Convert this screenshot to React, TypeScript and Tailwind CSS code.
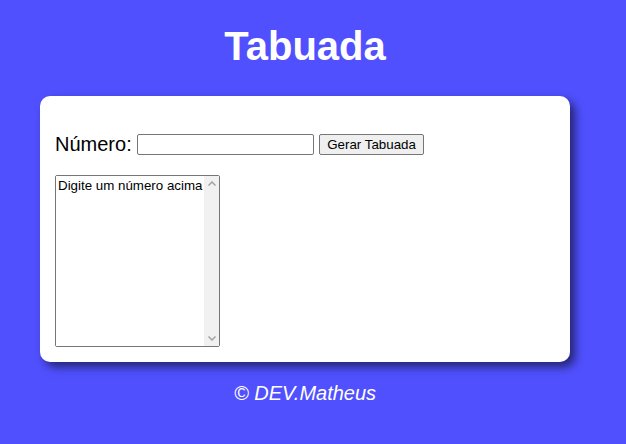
export default function App() {
  return (
    <div className="min-h-screen w-full bg-[#5050ff] font-['Liberation_Sans',Arial,sans-serif]">
      <div className="w-[610px] flex flex-col items-center">
        <h1 className="mt-[23px] text-[40px] leading-[46px] font-bold text-white">Tabuada</h1>

        <section className="mt-[27px] w-[530px] rounded-[10px] bg-white px-[15px] pt-[37px] pb-[15px] shadow-[5px_5px_10px_rgba(0,0,0,0.55)]">
          <div className="flex h-[23px] items-center">
            <label htmlFor="numero" className="text-[20px] leading-[23px] text-black">
              Número:
            </label>
            <input
              id="numero"
              type="number"
              className="ml-[5px] h-[21px] w-[177px] rounded-[2px] border border-[#767676] bg-white px-[2px] text-[13.33px] outline-none [appearance:textfield]"
            />
            <button
              type="button"
              className="ml-[5px] h-[21px] rounded-[2px] border border-[#767676] bg-[#efefef] px-[7.5px] text-[13.33px] leading-[15px] text-black"
            >
              Gerar Tabuada
            </button>
          </div>

          {/* textarea + fake classic scrollbar */}
          <div className="mt-[19px] flex h-[172px] w-[165px] rounded-[2px] border border-[#767676] bg-white">
            <textarea
              readOnly
              wrap="off"
              defaultValue="Digite um número acima"
              className="h-full min-w-0 flex-1 resize-none overflow-hidden whitespace-pre bg-white p-[2px] text-[13.33px] leading-[15px] text-black outline-none"
            />
            <div className="flex w-[15px] flex-col items-center justify-between bg-[#f1f1f1] py-[5px]">
              <svg width="8" height="5" viewBox="0 0 8 5">
                <path d="M0.5 4.5 L4 1 L7.5 4.5" fill="none" stroke="#a3a3a3" strokeWidth="1.5" />
              </svg>
              <svg width="8" height="5" viewBox="0 0 8 5">
                <path d="M0.5 0.5 L4 4 L7.5 0.5" fill="none" stroke="#a3a3a3" strokeWidth="1.5" />
              </svg>
            </div>
          </div>
        </section>

        <p className="mt-[20px] text-[20px] leading-[23px] italic text-white">© DEV.Matheus</p>
      </div>
    </div>
  );
}
